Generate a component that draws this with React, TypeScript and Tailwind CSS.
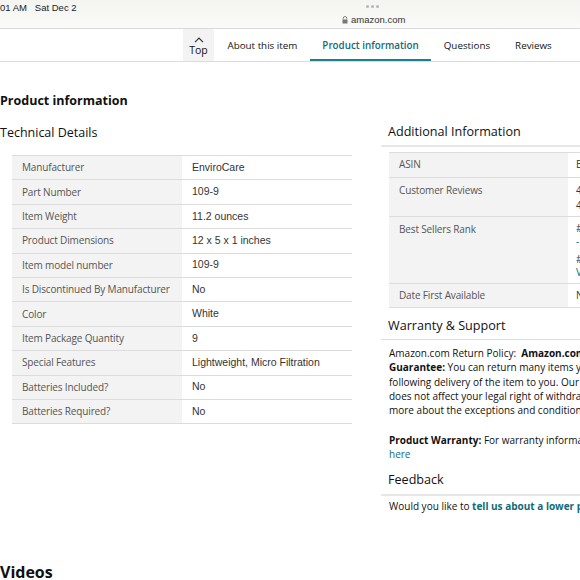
import React from 'react';

const techRows: [string, string][] = [
    ['Manufacturer', 'EnviroCare'],
    ['Part Number', '109-9'],
    ['Item Weight', '11.2 ounces'],
    ['Product Dimensions', '12 x 5 x 1 inches'],
    ['Item model number', '109-9'],
    ['Is Discontinued By Manufacturer', 'No'],
    ['Color', 'White'],
    ['Item Package Quantity', '9'],
    ['Special Features', 'Lightweight, Micro Filtration'],
    ['Batteries Included?', 'No'],
    ['Batteries Required?', 'No'],
];

const NavTab = ({ label, active }: { label: string; active?: boolean }) => (
    <div
        className={`flex items-center h-full px-[12.5px] pt-[4px] border-b-2 ${
            active ? 'border-[#1c7f8c] text-[#0f6c79] font-semibold' : 'border-transparent text-[#111]'
        }`}
    >
        {label}
    </div>
);

export default function App() {
    return (
        <div className="w-[580px] h-[580px] overflow-hidden bg-white font-['Open_Sans',sans-serif] text-[#0f1111]">
            {/* status / url bar */}
            <div className="relative h-[29px] bg-gradient-to-b from-[#f4f4f1] to-[#fafaf8] border-b border-[#d9d9d9]">
                <div className="absolute left-0 top-[1px] text-[9.5px] text-[#222] font-['Liberation_Sans',sans-serif] whitespace-nowrap">
                    01 AM&nbsp;&nbsp;&nbsp;Sat Dec 2
                </div>
                <div className="absolute left-[366px] top-[5px] flex gap-[2px]">
                    <span className="w-[3px] h-[3px] rounded-full bg-[#b5b5b5]" />
                    <span className="w-[3px] h-[3px] rounded-full bg-[#b5b5b5]" />
                    <span className="w-[3px] h-[3px] rounded-full bg-[#b5b5b5]" />
                </div>
                <div className="absolute left-[342px] top-[13px] flex items-center gap-[3px] text-[9.5px] text-[#333] font-['Liberation_Sans',sans-serif]">
                    <svg width="6" height="8" viewBox="0 0 6 8">
                        <path d="M1.2 3.5V2.3a1.8 1.8 0 0 1 3.6 0v1.2" fill="none" stroke="#777" strokeWidth="0.9" />
                        <rect x="0.5" y="3.4" width="5" height="4.2" rx="0.6" fill="#777" />
                    </svg>
                    amazon.com
                </div>
            </div>

            {/* sticky nav */}
            <div className="h-[33px] border-b border-[#dcdcdc] flex items-stretch text-[9.8px] whitespace-nowrap">
                <div className="w-[183px]" />
                <div className="w-[31px] bg-[#f3f3f3] flex flex-col items-center justify-center leading-none pt-[2px]">
                    <svg width="10" height="6" viewBox="0 0 10 6" className="mb-[2px]">
                        <path d="M1 5.2 5 1.2l4 4" fill="none" stroke="#333" strokeWidth="1.2" />
                    </svg>
                    <span className="text-[10.5px] text-[#111]">Top</span>
                </div>
                <div className="w-[1px]" />
                <NavTab label="About this item" />
                <NavTab label="Product information" active />
                <NavTab label="Questions" />
                <NavTab label="Reviews" />
            </div>

            <div className="flex">
                {/* left column */}
                <div className="w-[381px] shrink-0">
                    <div className="pt-[33px] text-[12.5px] font-bold leading-none">Product information</div>
                    <div className="pt-[19px] text-[12.5px] leading-none text-[#111]">Technical Details</div>
                    <div className="ml-[12px] mt-[16px] w-[340px] border-t border-[#dcdcdc]">
                        {techRows.map(([k, v]) => (
                            <div key={k} className="flex h-[24.4px] border-b border-[#dcdcdc] text-[10px] tracking-[-0.15px]">
                                <div className="w-[170px] bg-[#f3f3f3] pl-[10px] flex items-center text-[#555]">{k}</div>
                                <div className="pl-[10px] flex items-center text-[#333] font-['Liberation_Sans',sans-serif] text-[10.5px] tracking-normal">
                                    {v}
                                </div>
                            </div>
                        ))}
                    </div>
                    <div className="pt-[140px] text-[16px] font-bold leading-none">Videos</div>
                </div>

                {/* right column */}
                <div className="w-[300px] shrink-0">
                    <div className="pt-[64px] pl-[7px] pb-[6px] text-[12.6px] leading-none text-[#111] border-b-2 border-[#e7e7e7]">
                        Additional Information
                    </div>
                    <div className="ml-[8px] mt-[5px] border-t border-[#dcdcdc] text-[10px] tracking-[-0.15px]">
                        <div className="flex h-[25px] border-b border-[#dcdcdc]">
                            <div className="w-[179px] bg-[#f3f3f3] pl-[10px] flex items-center text-[#555]">ASIN</div>
                            <div className="pl-[8px] flex items-center text-[#333]">B00</div>
                        </div>
                        <div className="flex h-[39px] border-b border-[#dcdcdc]">
                            <div className="w-[179px] bg-[#f3f3f3] pl-[10px] pt-[5px] text-[#555]">Customer Reviews</div>
                            <div className="pl-[8px] pt-[5px] text-[#333] leading-[15px]">
                                <div>4.6</div>
                                <div>4,2</div>
                            </div>
                        </div>
                        <div className="flex h-[67px] border-b border-[#dcdcdc]">
                            <div className="w-[179px] bg-[#f3f3f3] pl-[10px] pt-[5px] text-[#555]">Best Sellers Rank</div>
                            <div className="pl-[8px] pt-[5px] text-[#333] leading-[13px]">
                                <div>#1</div>
                                <div className="text-[#0f6c79]">-</div>
                                <div className="mt-[5px]">#2</div>
                                <div className="text-[#0f6c79]">V</div>
                            </div>
                        </div>
                        <div className="flex h-[24px] border-b border-[#dcdcdc]">
                            <div className="w-[179px] bg-[#f3f3f3] pl-[10px] flex items-center text-[#555]">Date First Available</div>
                            <div className="pl-[8px] flex items-center text-[#333]">N</div>
                        </div>
                    </div>

                    <div className="pt-[12px] pl-[7px] pb-[7px] text-[12.6px] leading-none text-[#111] border-b border-[#dcdcdc]">
                        Warranty &amp; Support
                    </div>
                    <div className="pl-[8px] pt-[6px] text-[10px] leading-[14.3px] text-[#111] whitespace-nowrap">
                        <div>
                            Amazon.com Return Policy:&nbsp; <b>Amazon.com Voluntary 30-Day Return</b>
                        </div>
                        <div>
                            <b>Guarantee:</b> You can return many items you have purchased within 30 days
                        </div>
                        <div>following delivery of the item to you. Our Voluntary 30-Day Return Guarantee</div>
                        <div>does not affect your legal right of withdrawal in any way. You can find out</div>
                        <div>more about the exceptions and conditions here.</div>
                        <div className="mt-[15px]">
                            <b>Product Warranty:</b> For warranty information about this product, please click
                        </div>
                        <div className="text-[#0f6c79]">here</div>
                    </div>

                    <div className="pt-[13px] pl-[7px] pb-[7px] text-[12.6px] leading-none text-[#111] border-b-2 border-[#e7e7e7]">
                        Feedback
                    </div>
                    <div className="pl-[8px] pt-[3px] text-[10px] text-[#111] whitespace-nowrap">
                        Would you like to <b className="text-[#0f6c79]">tell us about a lower price</b>?
                    </div>
                </div>
            </div>
        </div>
    );
}
